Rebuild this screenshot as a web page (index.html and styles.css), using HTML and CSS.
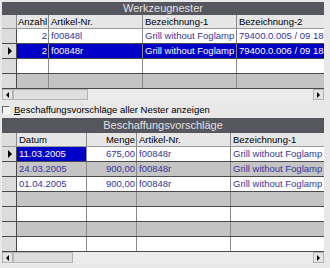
FILE: index.html
```html
<!DOCTYPE html>
<html lang="de">
<head>
    <meta charset="UTF-8">
    <title>Werkzeugnester</title>
    <link rel="stylesheet" href="styles.css">
</head>
<body>
    <div class="grid nester">
        <div class="caption">Werkzeugnester</div>
        <div class="row head">
            <div class="ind"></div>
            <div class="c">Anzahl</div>
            <div class="c">Artikel-Nr.</div>
            <div class="c">Bezeichnung-1</div>
            <div class="c">Bezeichnung-2</div>
        </div>
        <div class="row">
            <div class="ind"></div>
            <div class="c r">2</div>
            <div class="c">f00848l</div>
            <div class="c">Grill without Foglamp</div>
            <div class="c">79400.0.005 / 09 186</div>
        </div>
        <div class="row sel">
            <div class="ind"><span class="tri"></span></div>
            <div class="c r">2</div>
            <div class="c">f00848r</div>
            <div class="c">Grill without Foglamp</div>
            <div class="c">79400.0.006 / 09 186</div>
        </div>
        <div class="row">
            <div class="ind"></div>
            <div class="c"></div><div class="c"></div><div class="c"></div><div class="c"></div>
        </div>
        <div class="row alt">
            <div class="ind"></div>
            <div class="c"></div><div class="c"></div><div class="c"></div><div class="c"></div>
        </div>
        <div class="hscroll">
            <div class="btn"><span class="tri-l"></span></div>
            <div class="thumb thumb-a"></div>
            <div class="track"></div>
            <div class="btn"><span class="tri-r"></span></div>
        </div>
    </div>

    <label class="check">
        <span class="box"></span>
        <span><u>B</u>eschaffungsvorschläge aller Nester anzeigen</span>
    </label>

    <div class="grid vorschlag">
        <div class="caption">Beschaffungsvorschläge</div>
        <div class="row head">
            <div class="ind"></div>
            <div class="c">Datum</div>
            <div class="c r">Menge</div>
            <div class="c">Artikel-Nr.</div>
            <div class="c">Bezeichnung-1</div>
        </div>
        <div class="row">
            <div class="ind"><span class="tri"></span></div>
            <div class="c cur">11.03.2005</div>
            <div class="c r">675,00</div>
            <div class="c">f00848r</div>
            <div class="c">Grill without Foglamp</div>
        </div>
        <div class="row alt">
            <div class="ind"></div>
            <div class="c">24.03.2005</div>
            <div class="c r">900,00</div>
            <div class="c">f00848r</div>
            <div class="c">Grill without Foglamp</div>
        </div>
        <div class="row">
            <div class="ind"></div>
            <div class="c">01.04.2005</div>
            <div class="c r">900,00</div>
            <div class="c">f00848r</div>
            <div class="c">Grill without Foglamp</div>
        </div>
        <div class="row alt">
            <div class="ind"></div>
            <div class="c"></div><div class="c"></div><div class="c"></div><div class="c"></div>
        </div>
        <div class="row">
            <div class="ind"></div>
            <div class="c"></div><div class="c"></div><div class="c"></div><div class="c"></div>
        </div>
        <div class="row alt">
            <div class="ind"></div>
            <div class="c"></div><div class="c"></div><div class="c"></div><div class="c"></div>
        </div>
        <div class="row">
            <div class="ind"></div>
            <div class="c"></div><div class="c"></div><div class="c"></div><div class="c"></div>
        </div>
        <div class="hscroll">
            <div class="btn"><span class="tri-l"></span></div>
            <div class="thumb thumb-b"></div>
            <div class="track"></div>
            <div class="btn"><span class="tri-r"></span></div>
        </div>
    </div>
</body>
</html>
```

FILE: styles.css
```css
body {
    margin: 0;
    padding: 2px 6px 0 2px;
    background: #e8e8e8;
    font-family: "Liberation Sans", Arial, sans-serif;
    font-size: 9.5px;
    color: #000;
}

.grid {
    width: 322px;
    background: #e8e8e8;
}

.caption {
    height: 13px;
    line-height: 13px;
    background: #56565f;
    color: #e0e0e0;
    font-size: 11px;
    text-align: center;
}

.row {
    display: grid;
    height: 15px;
    box-sizing: border-box;
    border-bottom: 1px solid #4a4a4a;
    background: #ffffff;
}

.nester .row {
    grid-template-columns: 15px 32px 94px 94px 87px;
}

.vorschlag .row {
    grid-template-columns: 15px 70px 50px 94px 93px;
}

.vorschlag .caption {
    height: 15px;
    line-height: 15px;
}

.row.head {
    height: 14px;
    background: #e6e6e6;
    border-bottom: 1px solid #9a9a9a;
}

.row.alt {
    background: #c4c4c4;
}

.row.sel {
    background: #0000c8;
}

.c {
    border-right: 1px solid #8a8a8a;
    padding: 0 2px 0 2px;
    line-height: 14px;
    white-space: nowrap;
    overflow: hidden;
    color: #36369a;
}

.head .c {
    color: #000;
    line-height: 13px;
}

.nester .head .c:nth-child(2) {
    padding: 0 1px;
}

.sel .c,
.c.cur {
    color: #ffffff;
}

.c.cur {
    background: #0000c8;
}

.c.r {
    text-align: right;
    padding-right: 1px;
}

.c:last-child {
    border-right: none;
}

.ind {
    background: #dcdcdc;
    border-right: 1px solid #4a4a4a;
    display: flex;
    align-items: center;
    justify-content: center;
}

.head .ind {
    border-right: 1px solid #8a8a8a;
}

.tri {
    width: 0;
    height: 0;
    border-top: 4px solid transparent;
    border-bottom: 4px solid transparent;
    border-left: 4px solid #000;
    margin-left: 1px;
}

.hscroll {
    display: flex;
    height: 12px;
    background: #ececec;
}

.btn {
    width: 11px;
    height: 11px;
    box-sizing: border-box;
    border: 1px solid #b4b4b4;
    background: #e4e4e4;
    display: flex;
    align-items: center;
    justify-content: center;
}

.tri-l,
.tri-r {
    width: 0;
    height: 0;
    border-top: 3px solid transparent;
    border-bottom: 3px solid transparent;
}

.tri-l {
    border-right: 3px solid #000;
}

.tri-r {
    border-left: 3px solid #000;
}

.thumb {
    height: 11px;
    box-sizing: border-box;
    border: 1px solid #b4b4b4;
    background: #dedede;
}

.thumb-a {
    width: 75px;
}

.thumb-b {
    width: 60px;
}

.track {
    flex: 1;
}

.check {
    display: flex;
    align-items: center;
    gap: 4px;
    height: 17px;
}

.box {
    width: 8px;
    height: 8px;
    box-sizing: border-box;
    border-top: 1px solid #6a6a6a;
    border-left: 1px solid #6a6a6a;
    border-right: 1px solid #ffffff;
    border-bottom: 1px solid #ffffff;
    background: #f4f4f4;
}
```
